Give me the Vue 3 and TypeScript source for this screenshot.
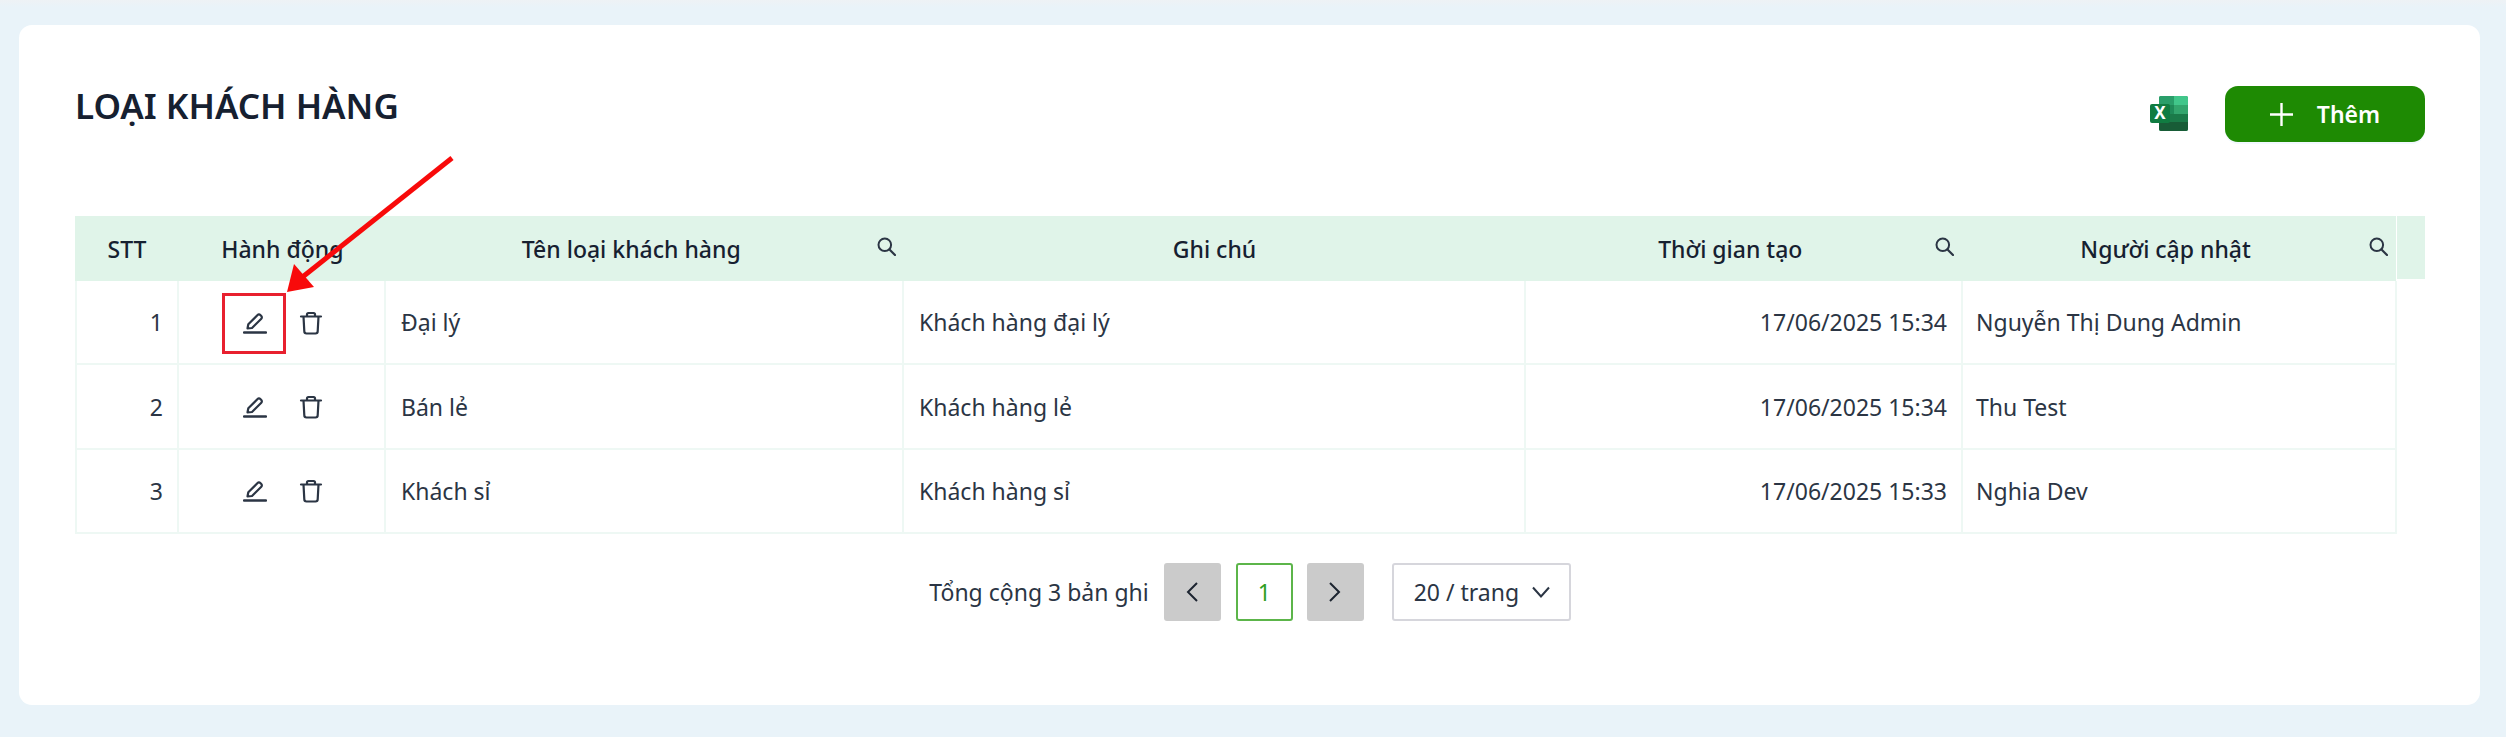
<script setup lang="ts">
interface Cot {
  ten: string;
  rong: number;
  timKiem: boolean;
}

interface Dong {
  stt: number;
  ten: string;
  ghiChu: string;
  thoiGian: string;
  nguoi: string;
}

const cots: Cot[] = [
  { ten: "STT", rong: 104, timKiem: false },
  { ten: "Hành động", rong: 207, timKiem: false },
  { ten: "Tên loại khách hàng", rong: 518, timKiem: true },
  { ten: "Ghi chú", rong: 622, timKiem: false },
  { ten: "Thời gian tạo", rong: 437, timKiem: true },
  { ten: "Người cập nhật", rong: 434, timKiem: true },
];

const dongs: Dong[] = [
  { stt: 1, ten: "Đại lý", ghiChu: "Khách hàng đại lý", thoiGian: "17/06/2025 15:34", nguoi: "Nguyễn Thị Dung Admin" },
  { stt: 2, ten: "Bán lẻ", ghiChu: "Khách hàng lẻ", thoiGian: "17/06/2025 15:34", nguoi: "Thu Test" },
  { stt: 3, ten: "Khách sỉ", ghiChu: "Khách hàng sỉ", thoiGian: "17/06/2025 15:33", nguoi: "Nghia Dev" },
];
</script>

<template>
  <div class="trang">
    <div class="the">
      <div class="dau-the">
        <h1 class="tieu-de">LOẠI KHÁCH HÀNG</h1>
        <div class="nut-nhom">
          <svg class="excel" width="38" height="35" viewBox="0 0 38 35">
            <rect x="9" y="0" width="29" height="35" rx="2" fill="#21a366" />
            <path d="M9 2a2 2 0 0 1 2-2h13v9H9z" fill="#2a9e6a" />
            <path d="M24 0h12a2 2 0 0 1 2 2v7H24z" fill="#41c68a" />
            <rect x="24" y="9" width="14" height="9" fill="#33a56d" />
            <rect x="9" y="9" width="15" height="9" fill="#1f8a58" />
            <rect x="9" y="18" width="29" height="8" fill="#1b7a49" />
            <path d="M9 26h29v7a2 2 0 0 1-2 2H11a2 2 0 0 1-2-2z" fill="#185c37" />
            <rect x="0" y="8" width="20" height="19" rx="2" fill="#107c41" />
            <text x="10" y="23" class="excel-x">X</text>
          </svg>
          <button type="button" class="nut-them">
            <svg width="23" height="23" viewBox="0 0 23 23">
              <path d="M11.5 0v23M0 11.5h23" stroke="#fff" stroke-width="2.4" fill="none" />
            </svg>
            <span>Thêm</span>
          </button>
        </div>
      </div>

      <div class="dau-bang">
        <div
          v-for="cot in cots"
          :key="cot.ten"
          class="o-dau"
          :style="{ width: cot.rong + 'px' }"
        >
          <span class="ten-cot">{{ cot.ten }}</span>
          <svg v-if="cot.timKiem" class="kinh-lup" width="19" height="19" viewBox="0 0 19 19">
            <circle cx="7.8" cy="7.8" r="6.3" fill="none" stroke="#2b3544" stroke-width="2" />
            <path d="M12.5 12.5l5.5 5.5" stroke="#2b3544" stroke-width="2.2" stroke-linecap="round" />
          </svg>
        </div>
        <div class="o-cuon"></div>
      </div>

      <div class="than-bang">
        <div v-for="dong in dongs" :key="dong.stt" class="dong">
          <div class="o so" :style="{ width: cots[0].rong + 'px' }">{{ dong.stt }}</div>
          <div class="o hanh-dong" :style="{ width: cots[1].rong + 'px' }">
            <svg width="24" height="24" viewBox="0 0 24 24">
              <path
                d="M4.5 17.5l.8-4.2L14.6 4a1.9 1.9 0 0 1 2.7 0l1 1a1.9 1.9 0 0 1 0 2.7L9 17l-4.5.5z"
                fill="none"
                stroke="#2b3544"
                stroke-width="2.2"
                stroke-linejoin="round"
              />
              <path d="M1 21.5h22" stroke="#2b3544" stroke-width="2.4" stroke-linecap="round" />
            </svg>
            <svg width="24" height="24" viewBox="0 0 24 24">
              <path
                d="M2 5.5h20M8 5.5V3.4A1.4 1.4 0 0 1 9.4 2h5.2A1.4 1.4 0 0 1 16 3.4v2.100M4.500 5.500l.8 14.800A2.200 2.200 0 0 0 7.500 22.500h9a2.200 2.200 0 0 0 2.200-2.200l.8-14.800"
                fill="none"
                stroke="#2b3544"
                stroke-width="2.200"
                stroke-linecap="round"
                stroke-linejoin="round"
              />
            </svg>
          </div>
          <div class="o" :style="{ width: cots[2].rong + 'px' }">{{ dong.ten }}</div>
          <div class="o" :style="{ width: cots[3].rong + 'px' }">{{ dong.ghiChu }}</div>
          <div class="o so" :style="{ width: cots[4].rong + 'px' }">{{ dong.thoiGian }}</div>
          <div class="o nguoi" :style="{ width: cots[5].rong + 'px' }">{{ dong.nguoi }}</div>
        </div>
      </div>

      <div class="phan-trang">
        <span class="tong">Tổng cộng 3 bản ghi</span>
        <button type="button" class="nut-trang xam">
          <svg width="14" height="22" viewBox="0 0 14 22">
            <path d="M12 2L3 11l9 9" fill="none" stroke="#1c2430" stroke-width="2" />
          </svg>
        </button>
        <button type="button" class="nut-trang hien-tai">1</button>
        <button type="button" class="nut-trang xam">
          <svg width="14" height="22" viewBox="0 0 14 22">
            <path d="M2 2l9 9-9 9" fill="none" stroke="#1c2430" stroke-width="2" />
          </svg>
        </button>
        <div class="chon-so">
          <span>20 / trang</span>
          <svg width="20" height="12" viewBox="0 0 20 12">
            <path d="M2 1.500l8 9 8-9" fill="none" stroke="#2b3544" stroke-width="2" />
          </svg>
        </div>
      </div>
    </div>

    <!-- chú thích vẽ đè lên ảnh: khung đỏ và mũi tên -->
    <div class="khung-do"></div>
    <svg class="mui-ten" width="2506" height="737" viewBox="0 0 2506 737">
      <path d="M452 158L300 279" stroke="#f80a0a" stroke-width="5" />
      <path d="M287 292L294 264L314 287z" fill="#f80a0a" />
    </svg>
  </div>
</template>

<style>
body {
  margin: 0;
  background: #e9f3f9;
}
</style>

<style scoped>
.trang {
  position: relative;
  box-sizing: border-box;
  width: 2506px;
  height: 737px;
  padding: 25px 26px 32px 19px;
  background: linear-gradient(#eef2f5 0, #e9f3f9 7px);
  font-family: "Noto Sans", "Open Sans", sans-serif;
  font-size: 23px;
  color: #2b3544;
  overflow: hidden;
}

.the {
  box-sizing: border-box;
  height: 680px;
  padding: 61px 55px 0 56px;
  background: #fff;
  border-radius: 13px;
}

.dau-the {
  display: flex;
  justify-content: space-between;
  align-items: flex-start;
  height: 56px;
  margin-bottom: 74px;
}

.tieu-de {
  margin: 0;
  font-size: 35px;
  font-weight: 600;
  line-height: 40px;
  color: #162030;
}

.nut-nhom {
  display: flex;
  align-items: center;
  gap: 37px;
}

.excel {
  margin-top: -2px;
}

.excel-x {
  font-size: 17px;
  font-weight: 700;
  fill: #fff;
  text-anchor: middle;
}

.nut-them {
  display: flex;
  align-items: center;
  justify-content: center;
  gap: 24px;
  width: 200px;
  height: 56px;
  border: none;
  border-radius: 13px;
  background: #1e8a03;
  box-shadow: 0 2px 0 rgba(5, 145, 255, 0.05);
  color: #fff;
  font-family: inherit;
  font-size: 23px;
  font-weight: 600;
}

.dau-bang {
  display: flex;
  align-items: flex-start;
}

.o-dau {
  display: flex;
  align-items: center;
  box-sizing: border-box;
  height: 65px;
  padding-right: 8px;
  background: #e0f4e9;
  color: #162030;
  font-weight: 500;
}

.o-dau:not(:has(.kinh-lup)) {
  padding-right: 0;
}

.ten-cot {
  flex: 1;
  text-align: center;
}

.kinh-lup {
  flex: none;
  margin-top: -4px;
}

.o-cuon {
  width: 28px;
  height: 63px;
  margin-left: 1px;
  background: #e0f4e9;
}

.dong {
  display: flex;
  height: 84.4px;
  box-sizing: border-box;
  border-bottom: 2px solid #eef8f4;
  width: 2322px;
}

.o {
  display: flex;
  align-items: center;
  box-sizing: border-box;
  padding: 0 14px 0 15px;
  border-right: 2px solid #eef8f4;
}

.o:first-child {
  border-left: 2px solid #eef8f4;
}

.so {
  justify-content: flex-end;
}

.hanh-dong {
  justify-content: center;
  gap: 32px;
  padding: 1px 0 0 3px;
}

.nguoi {
  padding-left: 13px;
}

.phan-trang {
  display: flex;
  justify-content: center;
  align-items: center;
  margin-top: 29px;
}

.tong {
  margin-right: 15px;
}

.nut-trang {
  display: flex;
  align-items: center;
  justify-content: center;
  box-sizing: border-box;
  width: 57px;
  height: 58px;
  padding: 0;
  border: none;
  border-radius: 3px;
  font-family: inherit;
  font-size: 23px;
}

.xam {
  background: #cbcbcb;
}

.hien-tai {
  margin: 0 14px 0 15px;
  background: #fff;
  border: 2px solid #5cb54a;
  color: #2f9e1f;
}

.chon-so {
  display: flex;
  align-items: center;
  justify-content: space-between;
  box-sizing: border-box;
  width: 179px;
  height: 58px;
  margin-left: 28px;
  padding: 0 18px 0 20px;
  border: 2px solid #d6d6dc;
  border-radius: 3px;
  background: #fff;
}

.khung-do {
  position: absolute;
  left: 222px;
  top: 293px;
  box-sizing: border-box;
  width: 64px;
  height: 61px;
  border: 3px solid #e8202f;
}

.mui-ten {
  position: absolute;
  left: 0;
  top: 0;
  pointer-events: none;
}
</style>
